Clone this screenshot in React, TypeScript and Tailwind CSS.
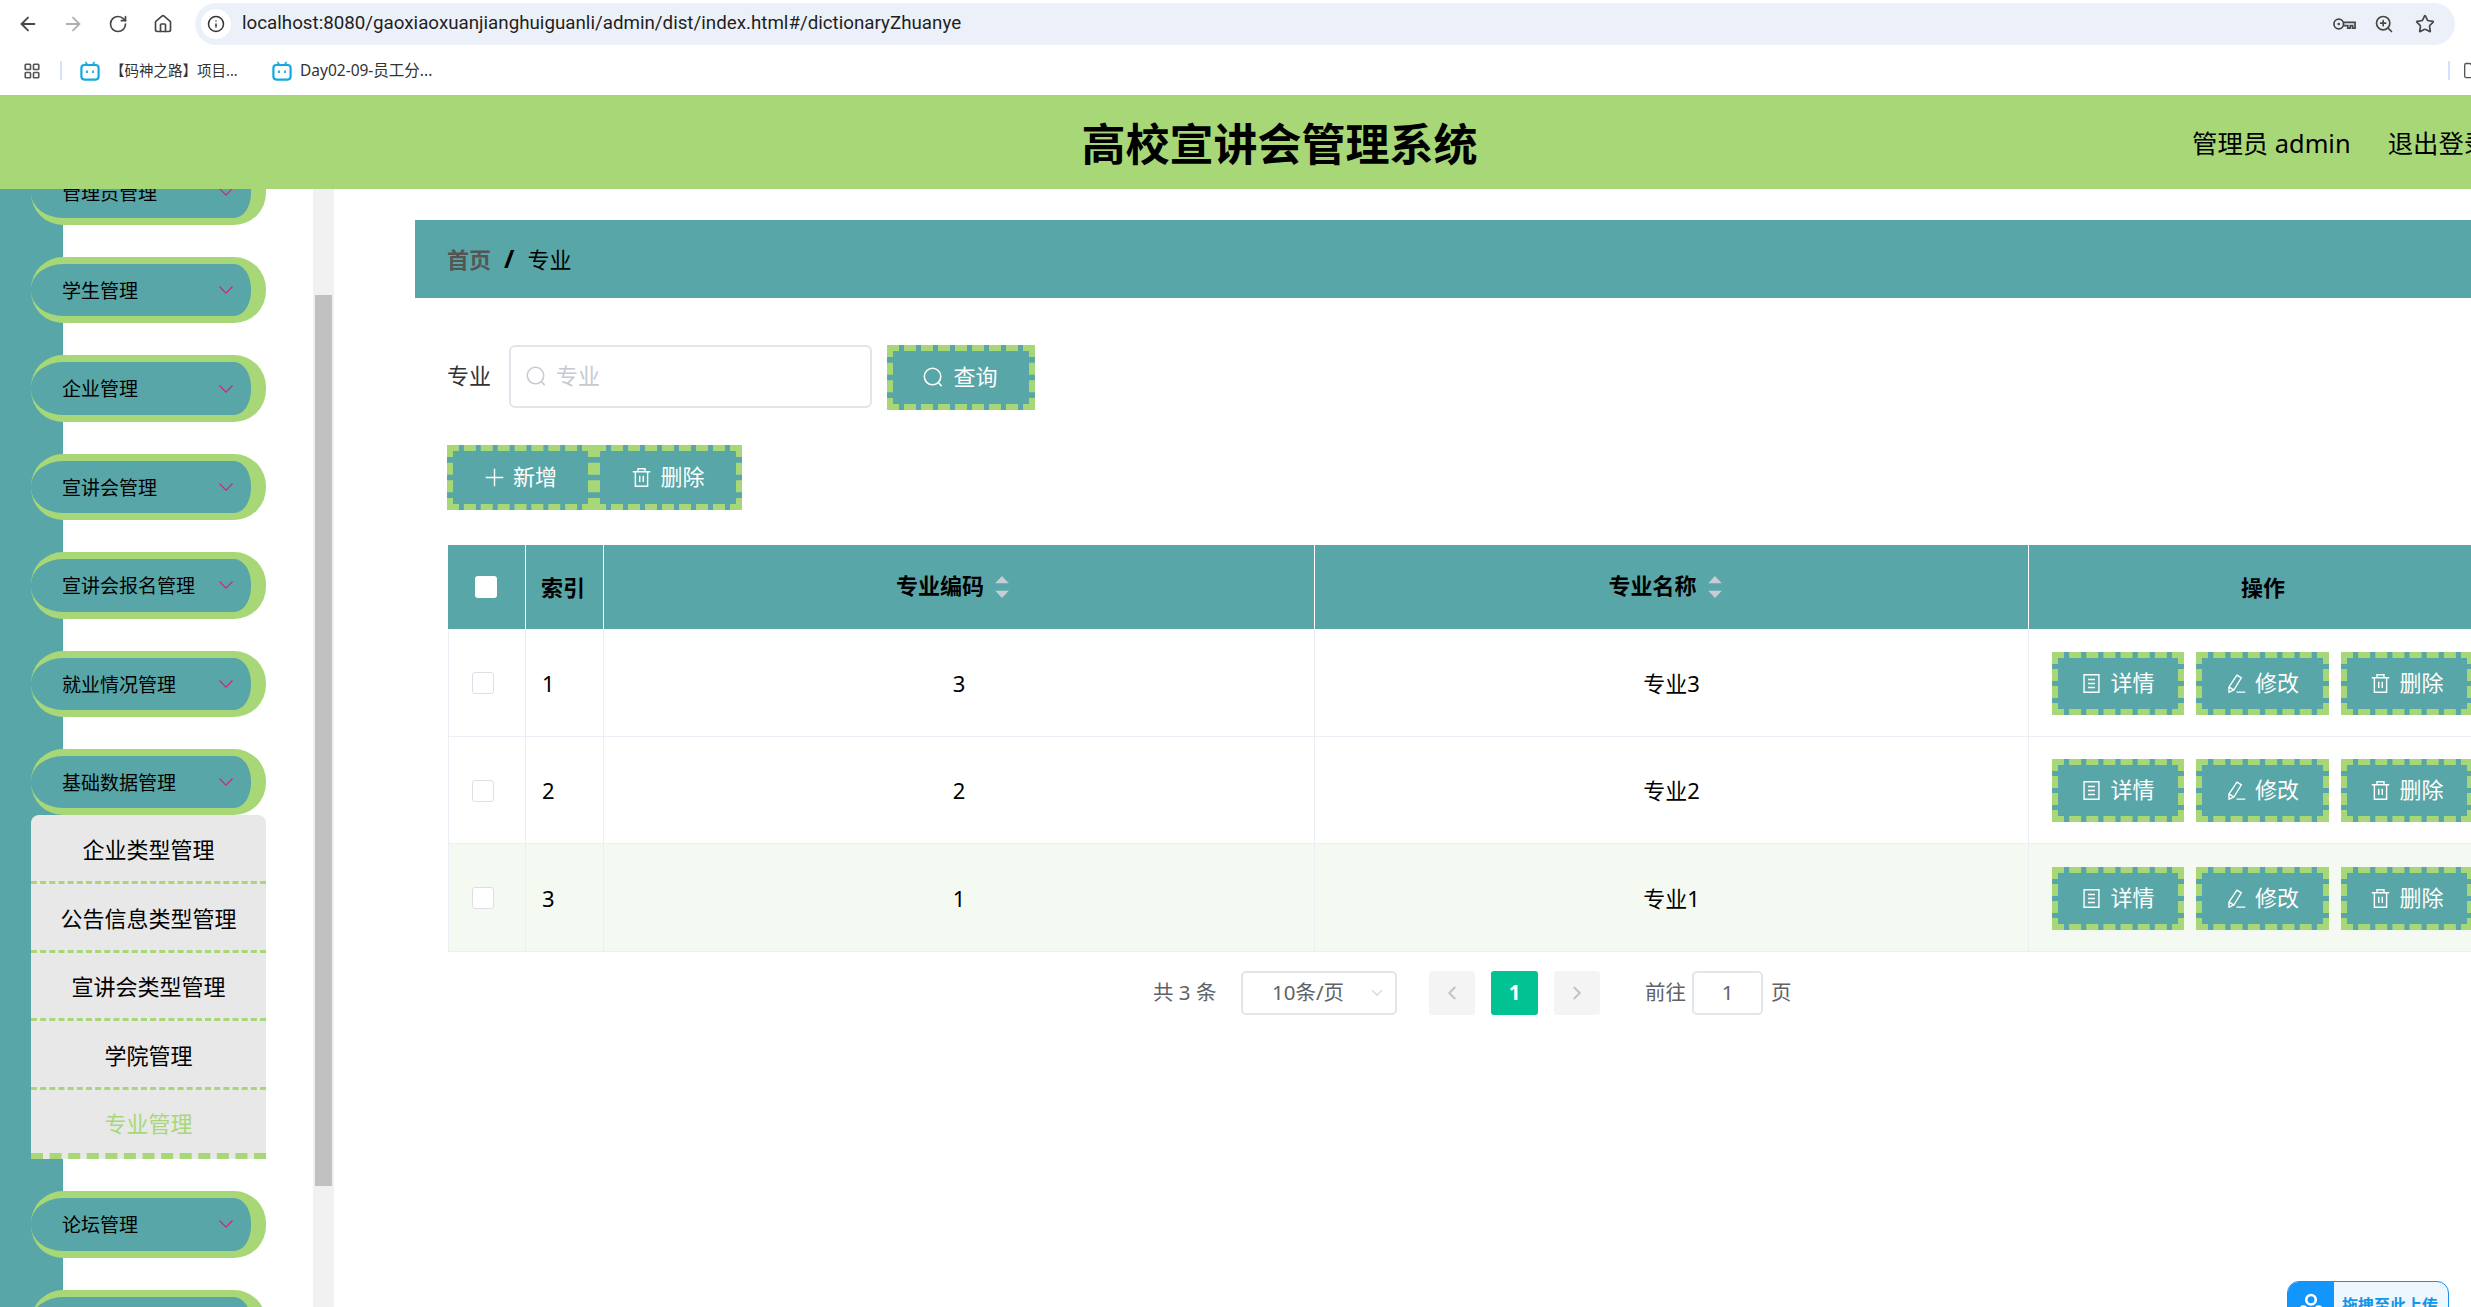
import { ArrowLeft, ArrowRight, ChevronDown, ChevronLeft, ChevronRight, Folder, Home, Info, LayoutGrid, RotateCw, Star, ZoomIn } from 'lucide-react';

const MENU_BEFORE = ['管理员管理', '学生管理', '企业管理', '宣讲会管理', '宣讲会报名管理', '就业情况管理', '基础数据管理'];
const MENU_SUB = ['企业类型管理', '公告信息类型管理', '宣讲会类型管理', '学院管理'];
const ROWS = [
  { index: 1, code: '3', name: '专业3' },
  { index: 2, code: '2', name: '专业2' },
  { index: 3, code: '1', name: '专业1' },
];

function SearchIcon({ className }: { className: string }) {
  return (
    <svg viewBox="0 0 24 24" fill="none" stroke="currentColor" strokeWidth="1.6" className={className}>
      <circle cx="11" cy="11" r="8.6" />
      <path d="M17.2 17.4l3.3 3.6" />
    </svg>
  );
}

function PlusIcon() {
  return (
    <svg viewBox="0 0 24 24" fill="none" stroke="currentColor" strokeWidth="1.6" className="w-[21px] h-[21px]">
      <path d="M12 2v20M2 12h20" />
    </svg>
  );
}

function TrashIcon() {
  return (
    <svg viewBox="0 0 24 24" fill="none" stroke="currentColor" strokeWidth="1.6" className="w-[21px] h-[21px]">
      <path d="M2 5.5h20M8 5.5V2h8v3.5M5 5.5V22h14V5.5M10 10v7M14 10v7" />
    </svg>
  );
}

function TicketsIcon() {
  return (
    <svg viewBox="0 0 24 24" fill="none" stroke="currentColor" strokeWidth="1.6" className="w-[21px] h-[21px]">
      <path d="M3.5 2h17v20h-17zM8 7.5h8M8 12h8M8 16.5h8" />
    </svg>
  );
}

function EditIcon() {
  return (
    <svg viewBox="0 0 24 24" fill="none" stroke="currentColor" strokeWidth="1.6" className="w-[21px] h-[21px]">
      <path d="M12.5 2.5l5 3-8.5 14-5.5 2.5-.2-5.8zM3.8 16.2l5.2 3.3M12 21.8h10" />
    </svg>
  );
}

function KeyIcon() {
  return (
    <svg viewBox="0 0 24 14" fill="none" stroke="#474747" strokeWidth="1.8" className="w-[23px] h-[14px]">
      <circle cx="6" cy="7" r="5" />
      <circle cx="6" cy="7" r="1.4" fill="#474747" stroke="none" />
      <path d="M11 5.2h12v6h-2.5V8.6h-2.5v2.6h-2.6V8.8H11" />
    </svg>
  );
}

function BiliIcon() {
  return (
    <svg viewBox="0 0 20 20" className="w-[20px] h-[20px]" fill="none" stroke="#12a9e0">
      <path d="M5.5 1l2 3M14.5 1l-2 3" strokeWidth="1.6" />
      <rect x="1.4" y="4" width="17.2" height="14.6" rx="3" strokeWidth="2.2" />
      <path d="M7 9.5v2.4M13 9.5v2.4" strokeWidth="1.8" />
    </svg>
  );
}

function DashedButton({ w, h, children }: { w: string; h: string; children: React.ReactNode }) {
  return (
    <button className={`${w} ${h} shrink-0 flex items-center justify-center gap-[8px] bg-[#58a6a7] border-[6px] border-dashed border-[#a8d777] text-white text-[22px]`}>
      {children}
    </button>
  );
}

function MenuPill({ label }: { label: string }) {
  return (
    <div className="w-[235px] h-[66.4px] shrink-0 flex items-center justify-between pl-[31px] pr-[18px] bg-[#58a6a7] border-y-[7px] border-r-[15px] border-l-0 border-[#a8d777] rounded-[32px] text-[19px] text-black">
      <span className="pt-[2px]">{label}</span>
      <svg viewBox="0 0 14 8" fill="none" stroke="#d6217a" strokeWidth="1.1" className="w-[14px] h-[8px]">
        <path d="M.5.5L7 7.2 13.5.5" />
      </svg>
    </div>
  );
}

function SortCaret() {
  return (
    <svg viewBox="0 0 14 21" className="w-[16px] h-[22px] fill-[#c8ccd4] ml-[10px] mt-[3px]">
      <path d="M7 0l6.5 7H.5zM7 21L.5 14h13z" />
    </svg>
  );
}

export default function App() {
  return (
    <div className="relative w-[2471px] h-[1307px] overflow-hidden bg-white font-['Noto_Sans','Noto_Sans_CJK_SC',sans-serif] text-black">
      {/* browser chrome */}
      <div className="h-[95px] bg-white">
        <div className="h-[46px] pt-[2px] pr-[16px] flex items-center">
          <div className="w-[195px] shrink-0 flex items-center text-[#474747]">
            <ArrowLeft className="ml-[17px] w-[22px] h-[22px]" strokeWidth={2} />
            <ArrowRight className="ml-[23px] w-[22px] h-[22px] text-[#b0b0b0]" strokeWidth={2} />
            <RotateCw className="ml-[24px] w-[20px] h-[20px]" strokeWidth={2} />
            <Home className="ml-[25px] w-[20px] h-[20px]" strokeWidth={2} />
          </div>
          <div className="flex-1 h-[42px] rounded-[21px] bg-[#ecf1f9] flex items-center pl-[6px] pr-[20px]">
            <div className="w-[30px] h-[30px] rounded-full bg-white flex items-center justify-center">
              <Info className="w-[18px] h-[18px] text-[#333]" strokeWidth={2} />
            </div>
            <span className="ml-[11px] flex-1 pb-[1px] text-[18.75px] text-[#1f1f1f] font-['Roboto','Noto_Sans_CJK_SC',sans-serif]">localhost:8080/gaoxiaoxuanjianghuiguanli/admin/dist/index.html#/dictionaryZhuanye</span>
            <KeyIcon />
            <ZoomIn className="ml-[18px] w-[20px] h-[20px] text-[#474747]" strokeWidth={2} />
            <Star className="ml-[21px] w-[20px] h-[20px] text-[#474747]" strokeWidth={2} />
          </div>
        </div>
        <div className="h-[49px] flex items-center text-[14.5px] text-[#333]">
          <LayoutGrid className="ml-[23px] w-[18px] h-[18px] text-[#555]" strokeWidth={2.2} />
          <div className="ml-[19px] w-[2px] h-[19px] bg-[#d3e3fd]" />
          <div className="ml-[18px]"><BiliIcon /></div>
          <span className="ml-[10px] w-[162px]">【码神之路】项目...</span>
          <BiliIcon />
          <span className="ml-[8px] text-[15.5px]">Day02-09-员工分...</span>
          <div className="ml-auto w-[2px] h-[19px] bg-[#d3e3fd]" />
          <Folder className="ml-[13px] -mr-[12px] w-[20px] h-[20px] text-[#555] shrink-0" strokeWidth={1.6} />
        </div>
      </div>

      {/* app header */}
      <div className="relative h-[94px] bg-[#a8d777] flex items-center justify-center pl-[88px]">
        <span className="pt-[3px] text-[44px] font-bold">高校宣讲会管理系统</span>
        <div className="absolute left-[2192px] top-0 h-full pt-[2px] flex items-center text-[25.4px] whitespace-nowrap">
          <span>管理员 admin</span>
          <span className="ml-[37px]">退出登录</span>
        </div>
      </div>

      <div className="flex h-[1118px]">
        {/* sidebar */}
        <aside className="w-[313px] shrink-0 overflow-hidden pl-[31px] bg-[linear-gradient(to_right,#58a6a7_63px,#f3f8ff_63px,#ffffff_68px)]">
          <div className="-mt-[30.4px] flex flex-col gap-[32px]">
            {MENU_BEFORE.slice(0, 6).map((m) => (
              <MenuPill key={m} label={m} />
            ))}
            <div>
              <MenuPill label={MENU_BEFORE[6]} />
              <ul className="w-[235px] bg-[#e8e8e8] rounded-t-[8px] text-[22px] text-center">
                {MENU_SUB.map((s) => (
                  <li key={s} className="h-[68.6px] pt-[3px] flex items-center justify-center border-b-[3px] border-dashed border-[#a8d777]">
                    {s}
                  </li>
                ))}
                <li className="h-[69.5px] pt-[5px] flex items-center justify-center text-[#a8d777] border-b-[6px] border-dashed border-[#a8d777]">专业管理</li>
              </ul>
            </div>
            <MenuPill label="论坛管理" />
            <MenuPill label="公告信息管理" />
          </div>
        </aside>
        <div className="w-[21px] shrink-0 bg-[#f1f1f1] px-[2px] pt-[106px]">
          <div className="h-[891px] bg-[#c1c1c1]" />
        </div>

        {/* main */}
        <main className="flex-1 min-w-0 overflow-hidden pl-[81px] pt-[31px]">
          <div className="h-[78px] bg-[#58a6a7] flex items-center pl-[32px] text-[22px]">
            <span className="font-bold text-[#555]">首页</span>
            <span className="mx-[13px] text-[25px] font-bold">/</span>
            <span>专业</span>
          </div>

          <div className="mt-[47px] ml-[32px] flex items-start">
            <span className="w-[62px] h-[63px] pb-[2px] flex items-center text-[22px] text-[#333]">专业</span>
            <div className="w-[363px] h-[63px] rounded-[6px] border-2 border-[#e3e5ec] flex items-center pl-[14px] text-[22px] text-[#c6c9d2]">
              <SearchIcon className="w-[23px] h-[23px]" />
              <span className="ml-[8px] pb-[2px]">专业</span>
            </div>
            <div className="ml-[15px]">
              <DashedButton w="w-[148px]" h="h-[65px]">
                <SearchIcon className="w-[23px] h-[23px] -ml-[2px]" />
                <span className="pb-[2px]">查询</span>
              </DashedButton>
            </div>
          </div>

          <div className="mt-[35px] ml-[32px] flex">
            <DashedButton w="w-[147px]" h="h-[65px]">
              <PlusIcon />
              <span className="pb-[2px]">新增</span>
            </DashedButton>
            <DashedButton w="w-[148px]" h="h-[65px]">
              <TrashIcon />
              <span className="pb-[2px]">删除</span>
            </DashedButton>
          </div>

          <table className="mt-[35px] ml-[33px] w-[2051px] table-fixed border-separate border-spacing-0 text-[22px]">
            <colgroup>
              <col className="w-[78px]" />
              <col className="w-[78px]" />
              <col className="w-[711px]" />
              <col className="w-[714px]" />
              <col className="w-[470px]" />
            </colgroup>
            <thead>
              <tr className="h-[84px] bg-[#58a6a7] font-bold">
                <th className="border-r border-white">
                  <div className="w-[22px] h-[22px] ml-[27px] bg-white rounded-[3px]" />
                </th>
                <th className="border-r border-white text-left pl-[15px]">索引</th>
                <th className="border-r border-white">
                  <div className="flex items-center justify-center pr-[12px] pb-[3px]">专业编码<SortCaret /></div>
                </th>
                <th className="border-r border-white">
                  <div className="flex items-center justify-center pr-[12px] pb-[3px]">专业名称<SortCaret /></div>
                </th>
                <th className="pr-[2px]">操作</th>
              </tr>
            </thead>
            <tbody>
              {ROWS.map((r) => (
                <tr key={r.index} className={`h-[107.5px] ${r.index === 3 ? 'bg-[#f4faf1]' : 'bg-white'}`}>
                  <td className="pt-[2px] border-l border-r border-b border-[#ebeef5]">
                    <div className="w-[22px] h-[22px] ml-[23px] rounded-[3px] bg-white border border-[#dcdfe6]" />
                  </td>
                  <td className="pt-[2px] border-r border-b border-[#ebeef5] pl-[16px]">{r.index}</td>
                  <td className="pt-[2px] border-r border-b border-[#ebeef5] text-center">{r.code}</td>
                  <td className="pt-[2px] border-r border-b border-[#ebeef5] text-center">{r.name}</td>
                  <td className="pt-[2px] border-b border-[#ebeef5] pl-[23px]">
                    <div className="flex gap-[12px]">
                      <DashedButton w="w-[132px]" h="h-[63px]">
                        <TicketsIcon />
                        <span className="pb-[2px]">详情</span>
                      </DashedButton>
                      <DashedButton w="w-[133px]" h="h-[63px]">
                        <EditIcon />
                        <span className="pb-[2px]">修改</span>
                      </DashedButton>
                      <DashedButton w="w-[132px]" h="h-[63px]">
                        <TrashIcon />
                        <span className="pb-[2px]">删除</span>
                      </DashedButton>
                    </div>
                  </td>
                </tr>
              ))}
            </tbody>
          </table>

          <div className="mt-[19px] ml-[738px] flex items-center h-[44px] text-[20.5px] text-[#606266]">
            <span className="w-[88px]">共 3 条</span>
            <div className="w-[156px] h-[44px] rounded-[5px] border-2 border-[#e3e5ec] flex items-center pl-[29px] pr-[9px]">
              <span className="flex-1">10条/页</span>
              <ChevronDown className="w-[18px] h-[18px] text-[#c0c4cc]" strokeWidth={1.4} />
            </div>
            <div className="ml-[32px] w-[46px] h-[44px] rounded-[3px] bg-[#f4f4f5] flex items-center justify-center">
              <ChevronLeft className="w-[22px] h-[22px] text-[#c0c4cc]" strokeWidth={2.2} />
            </div>
            <div className="ml-[16px] w-[47px] h-[44px] rounded-[3px] bg-[#00c292] text-white font-bold flex items-center justify-center">1</div>
            <div className="ml-[16px] w-[46px] h-[44px] rounded-[3px] bg-[#f4f4f5] flex items-center justify-center">
              <ChevronRight className="w-[22px] h-[22px] text-[#c0c4cc]" strokeWidth={2.2} />
            </div>
            <span className="ml-[45px]">前往</span>
            <div className="ml-[6px] w-[71px] h-[44px] rounded-[5px] border-2 border-[#e3e5ec] flex items-center justify-center">1</div>
            <span className="ml-[8px]">页</span>
          </div>
        </main>
      </div>

      {/* floating upload widget */}
      <div className="absolute left-[2287px] top-[1281px] w-[162px] h-[52px] rounded-[12px] border border-[#1a90ee] bg-[#eef7fe] flex overflow-hidden">
        <div className="w-[46px] h-full bg-[#1296fc] flex justify-center pt-[11px]">
          <svg viewBox="0 0 24 18" className="w-[26px] h-[20px] fill-white">
            <circle cx="12" cy="6" r="4.4" fill="none" stroke="#fff" strokeWidth="2.4" />
            <circle cx="5" cy="15" r="4" />
            <circle cx="19" cy="15" r="4" />
          </svg>
        </div>
        <span className="ml-[8px] pt-[11px] text-[16px] font-bold text-[#1296e8] whitespace-nowrap">拖拽至此上传</span>
      </div>
    </div>
  );
}
